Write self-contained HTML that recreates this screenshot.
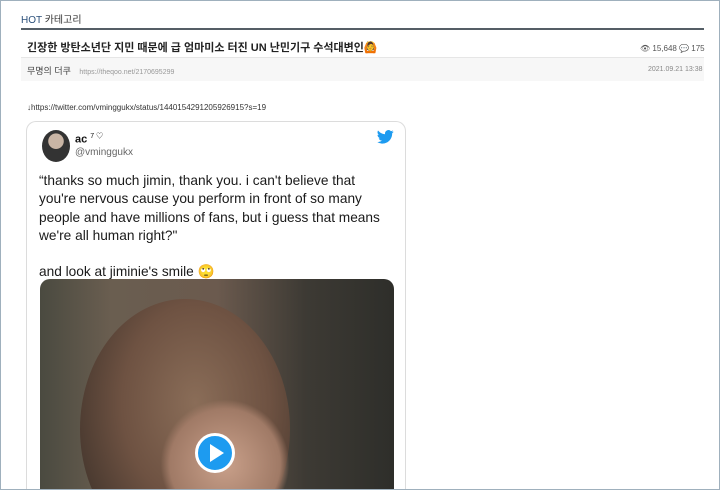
<!DOCTYPE html>
<html><head><meta charset="utf-8"><style>
html,body{margin:0;width:720px;height:490px;overflow:hidden}
body{background:#fff;font-family:"Liberation Sans","Noto Sans CJK KR",sans-serif;position:relative}
.frame{position:absolute;left:0;top:0;width:718px;height:488px;border:1px solid #9fb0bd;z-index:5;pointer-events:none}
.abs{position:absolute}
</style></head><body>
<div class="frame"></div>
<div class="abs" style="left:21px;top:11px;font-size:10px;color:#333"><span style="color:#2a4f7a">HOT</span> 카테고리</div>
<div class="abs" style="left:21px;top:28px;width:683px;height:2px;background:#555e66"></div>
<div class="abs" style="left:27px;top:39px;font-size:11px;font-weight:bold;color:#222">긴장한 방탄소년단 지민 때문에 급 엄마미소 터진 UN 난민기구 수석대변인<span style="font-size:11px">🙆</span></div>
<div class="abs" style="left:640px;top:44px;font-size:8px;color:#555">👁 15,648 💬 175</div>
<div class="abs" style="left:21px;top:57px;width:683px;height:23px;background:#f7f7f7;border-top:1px solid #e6e6e6"></div>
<div class="abs" style="left:27px;top:64px;font-size:9px;color:#444">무명의 더쿠 <span style="font-size:7px;color:#999;margin-left:6px">https://theqoo.net/2170695299</span></div>
<div class="abs" style="left:648px;top:66px;font-size:7px;color:#888">2021.09.21 13:38</div>
<div class="abs" style="left:27px;top:103px;font-size:8px;color:#333">↓https://twitter.com/vminggukx/status/1440154291205926915?s=19</div>
<div class="abs" style="left:26px;top:121px;width:380px;height:369px;border:1px solid #dcdcdc;border-bottom:none;border-radius:10px 10px 0 0;box-sizing:border-box"></div>
<div class="abs" style="left:42px;top:130px;width:28px;height:32px;border-radius:50%;background:radial-gradient(circle at 50% 35%,#c9b5a5 0 30%,#333 32% 100%)"></div>
<div class="abs" style="left:75px;top:131px;font-size:11px;font-weight:bold;color:#111">ac <sup style="font-size:7px;font-weight:normal">7 ♡</sup></div>
<div class="abs" style="left:75px;top:147px;font-size:10px;color:#666">@vminggukx</div>
<svg class="abs" style="left:377px;top:130px" width="17" height="14" viewBox="0 0 24 20"><path fill="#1d9bf0" d="M23.6 2.4c-.9.4-1.8.6-2.8.8 1-.6 1.8-1.6 2.1-2.7-1 .6-2 1-3.1 1.2A4.9 4.9 0 0 0 11.4 6 13.9 13.9 0 0 1 1.3.8a4.9 4.9 0 0 0 1.5 6.6c-.8 0-1.6-.3-2.2-.6 0 2.4 1.7 4.4 3.9 4.8-.7.2-1.5.2-2.2.1.6 2 2.4 3.4 4.6 3.4A9.9 9.9 0 0 1 0 17.2 14 14 0 0 0 7.5 19.4c9.1 0 14-7.5 14-14v-.6c1-.7 1.8-1.5 2.1-2.4z"/></svg>
<div class="abs" style="left:39px;top:172px;white-space:nowrap;font-size:13.7px;line-height:18.3px;color:#1a1a1a">“thanks so much jimin, thank you. i can't believe that<br>you're nervous cause you perform in front of so many<br>people and have millions of fans, but i guess that means<br>we're all human right?"<br><br>and look at jiminie's smile <span style="color:#e8b000">🙄</span></div>
<div class="abs" style="left:40px;top:279px;width:354px;height:211px;border-radius:10px 10px 0 0;overflow:hidden;background:linear-gradient(90deg,#4a4a40 0%,#6a5e50 20%,#6b5a4e 50%,#3d3a34 75%,#2e2e2a 100%)">
<div style="position:absolute;left:40px;top:20px;width:210px;height:260px;border-radius:50%;background:radial-gradient(ellipse at 55% 40%,#8a6d58 0%,#6e5242 45%,#4a3a30 75%,transparent 76%)"></div>
<div style="position:absolute;left:120px;top:120px;width:130px;height:130px;border-radius:50%;background:radial-gradient(#c9a08a,#a07a66 60%,transparent 70%)"></div>
</div>
<div class="abs" style="left:195px;top:433px;width:40px;height:40px;border-radius:50%;background:#1d9bf0;border:3px solid #fff;box-sizing:border-box"></div>
<div class="abs" style="left:210px;top:444px;width:0;height:0;border-left:14px solid #fff;border-top:9px solid transparent;border-bottom:9px solid transparent"></div>
</body></html>
